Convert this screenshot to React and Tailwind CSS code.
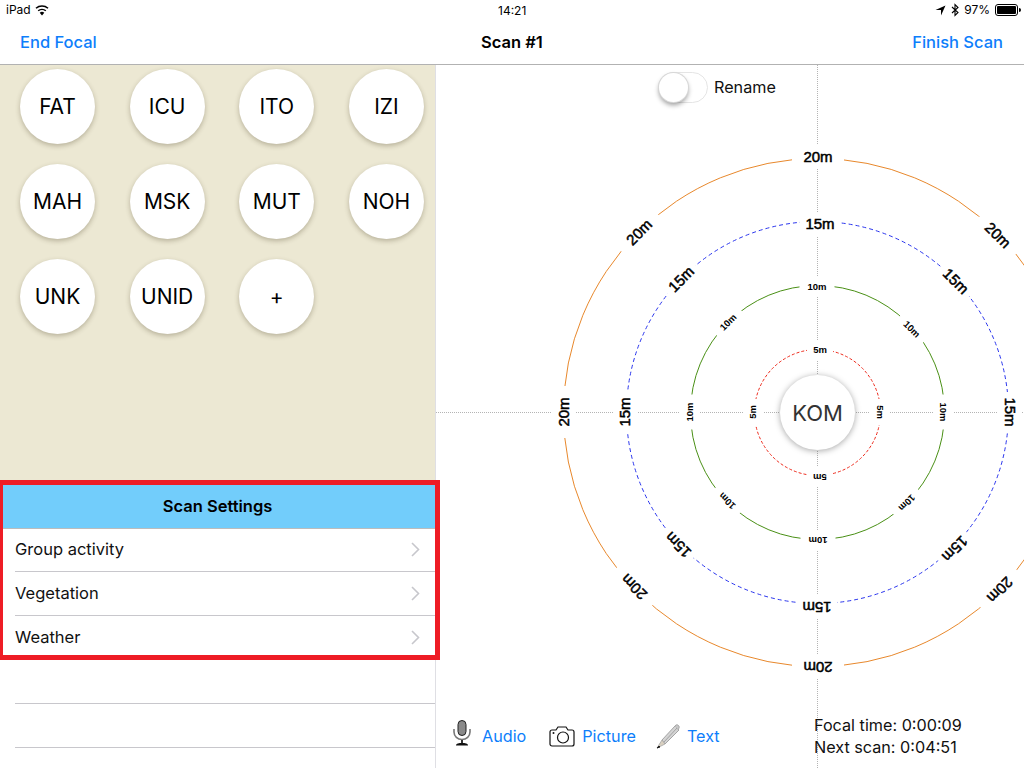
import React from "react";

const tags = ["FAT", "ICU", "ITO", "IZI", "MAH", "MSK", "MUT", "NOH", "UNK", "UNID", "+"];
const settings = ["Group activity", "Vegetation", "Weather"];

// centre of the rings inside the right panel (panel starts at x=436, y=65)
const cx = 381.5;
const cy = 347.5;

const rings = [
  { r: 254, color: "#e8882c", dash: "none" },
  { r: 191, color: "#2a35ee", dash: "4 3" },
  { r: 127, color: "#4a9016", dash: "none" },
  { r: 63, color: "#ee2a1c", dash: "3 2" },
];

// x, y are page coordinates of the label centre
const big = [
  [818, 157, 0, "20m"], [998, 235, 45, "20m"], [1000, 590, 135, "20m"],
  [818, 667, 180, "20m"], [634, 587, 225, "20m"], [564, 412, 270, "20m"], [639, 232, 315, "20m"],
  [820, 224, 0, "15m"], [956, 281, 45, "15m"], [1010, 412, 90, "15m"], [955, 549, 135, "15m"],
  [817, 607, 180, "15m"], [678, 545, 225, "15m"], [625, 412, 270, "15m"], [681, 279, 315, "15m"],
];
const small = [
  [817, 287, 0, "10m"], [912, 329, 45, "10m"], [943, 412, 90, "10m"], [907, 503, 135, "10m"],
  [818, 540, 180, "10m"], [727, 501, 225, "10m"], [690, 412, 270, "10m"], [728, 322, 315, "10m"],
  [820, 350, 0, "5m"], [880, 412, 90, "5m"], [820, 477, 180, "5m"], [753, 412, 270, "5m"],
];

const Label = ({ item, size, gap, height, bold }) => {
  const [x, y, rot, text] = item;
  return (
    <g transform={`translate(${x - 436} ${y - 65}) rotate(${rot})`}>
      <rect x={-gap / 2} y={-height / 2} width={gap} height={height} fill="#ffffff" />
      <text
        textAnchor="middle"
        y={size * 0.36}
        fontSize={size}
        fontWeight={bold ? 700 : 400}
        stroke="#000000"
        strokeWidth={bold ? 0 : 0.5}
        fill="#000000"
      >
        {text}
      </text>
    </g>
  );
};

const Radar = () => (
  <svg className="absolute inset-0 font-['Liberation_Sans',sans-serif]" width="588" height="703" viewBox="0 0 588 703">
    <line x1="0" y1={cy} x2="588" y2={cy} stroke="#b4b4b4" strokeDasharray="1 1" />
    <line x1={cx} y1="0" x2={cx} y2="703" stroke="#b4b4b4" strokeDasharray="1 1" />
    {rings.map((ring) => (
      <circle
        key={ring.r}
        cx={cx}
        cy={cy}
        r={ring.r}
        fill="none"
        stroke={ring.color}
        strokeDasharray={ring.dash}
      />
    ))}
    {big.map((item, i) => (
      <Label key={i} item={item} size={15} gap={item[3] === "20m" ? 52 : 40} height={24} />
    ))}
    {small.map((item, i) => (
      <Label key={i} item={item} size={9.5} gap={item[3] === "10m" ? 35 : 26} height={20} bold />
    ))}
  </svg>
);

const StatusBar = () => (
  <div className="relative flex h-5 items-center justify-between pl-[6px] pr-[3px] text-[12px] text-black">
    <div className="flex items-center gap-[4px]">
      <span>iPad</span>
      <svg width="14" height="11" viewBox="0 0 14 11">
        <path d="M7 10.500 4.700 7.800a3.500 3.500 0 0 1 4.600 0z" fill="#000" />
        <path d="M3.200 5.800a5.800 5.800 0 0 1 7.600 0M1 3.300a9 9 0 0 1 12 0" fill="none" stroke="#000" strokeWidth="1.500" />
      </svg>
    </div>
    <span className="absolute left-[498px] top-[2px]">14:21</span>
    <div className="flex items-center gap-[5px]">
      <svg width="11" height="11" viewBox="0 0 11 11">
        <path d="M10.500.5 6 10.500V5H.5z" fill="#000" />
      </svg>
      <svg width="8" height="14" viewBox="0 0 8 14">
        <path d="M1 4 7 9.500 4 12.500V1.500l3 3-6 5.500" fill="none" stroke="#000" strokeWidth="1.100" />
      </svg>
      <span>97%</span>
      <svg width="26" height="12" viewBox="0 0 26 12">
        <rect x="0.500" y="0.500" width="22" height="11" rx="2.500" fill="none" stroke="#000" />
        <rect x="2" y="2" width="19" height="8" rx="1" fill="#000" />
        <path d="M24 4a2 2 0 0 1 0 4z" fill="#000" />
      </svg>
    </div>
  </div>
);

const NavBar = () => (
  <div className="relative flex h-[45px] items-center justify-between border-b border-[#b2b2b2] pl-5 pr-[21px] text-[16.500px] font-medium">
    <span className="text-[#0d7efb]">End Focal</span>
    <span className="absolute left-[481px] text-black font-semibold">Scan #1</span>
    <span className="text-[#0d7efb]">Finish Scan</span>
  </div>
);

const TagButton = ({ label }) => (
  <div className="flex h-[75px] w-[75px] items-center justify-center rounded-full bg-white text-[21px] text-black shadow-[0_2px_5px_rgba(60,50,20,0.3)]">
    {label}
  </div>
);

const LeftPanel = () => (
  <div className="flex w-[436px] shrink-0 flex-col border-r border-[#dfdfe4]">
    <div className="h-[418px] bg-[#ece8d3] pt-1 pl-5 pr-[11px]">
      <div className="grid grid-cols-[repeat(4,75px)] justify-between gap-y-5">
        {tags.map((tag) => (
          <TagButton key={tag} label={tag} />
        ))}
      </div>
    </div>
    <div className="flex h-[46px] items-center justify-center border-b border-[#bcbcbc] bg-[#72cdfb] pt-[1px] text-[16.500px] font-semibold text-black">
      Scan Settings
    </div>
    {settings.map((name, i) => (
      <div
        key={name}
        className={`ml-[15px] flex items-center justify-between border-b border-[#c8c7cc] pr-[15px] text-[16.500px] text-[#111] ${
          i === 0 ? "h-[43px] pb-[1px]" : "h-11"
        }`}
      >
        <span>{name}</span>
        <svg width="9" height="15" viewBox="0 0 9 15">
          <path d="M1 1l6.500 6.500L1 14" fill="none" stroke="#c7c7cc" strokeWidth="1.600" />
        </svg>
      </div>
    ))}
    <div className="ml-[15px] h-11 border-b border-[#c8c7cc]" />
    <div className="ml-[15px] h-11 border-b border-[#c8c7cc]" />
  </div>
);

const MicIcon = () => (
  <svg className="-translate-y-[3px]" width="18" height="26" viewBox="0 0 18 26">
    <rect x="5" y="0.500" width="8" height="15" rx="4" fill="#8a8a8a" stroke="#222" />
    <path d="M1 9v3a8 7.500 0 0 0 16 0V9" fill="none" stroke="#777" strokeWidth="1.600" />
    <path d="M9 20v3" stroke="#333" strokeWidth="2" />
    <path d="M3 25.500c0-2 3-2.500 6-2.500s6 .5 6 2.500z" fill="#111" />
  </svg>
);

const CameraIcon = () => (
  <svg width="26" height="21" viewBox="0 0 26 21">
    <path d="M3 4h4l2-3h8l2 3h4a2 2 0 0 1 2 2v12a2 2 0 0 1-2 2H3a2 2 0 0 1-2-2V6a2 2 0 0 1 2-2z" fill="none" stroke="#111" strokeWidth="1.200" />
    <circle cx="14" cy="11.500" r="5.500" fill="none" stroke="#111" strokeWidth="1.200" />
    <circle cx="4.500" cy="7" r="1" fill="#111" />
  </svg>
);

const PencilIcon = () => (
  <svg width="25" height="26" viewBox="0 0 25 26">
    <path d="M6 17 19 3l4 4L9 21z" fill="#d4d4d4" stroke="#a4a4a4" strokeWidth="1" />
    <path d="M8 19 21 5M19 3c1-1.500 2.500-1.500 3.500-.5s1 2.500-.5 4" fill="#c8c8c8" stroke="#a4a4a4" />
    <path d="M6 17l3 4-8 4z" fill="#d9d0c0" stroke="#a4a4a4" strokeWidth="0.800" />
    <path d="M3 23l-2 2 3-1z" fill="#222" stroke="#222" />
  </svg>
);

const RightPanel = () => (
  <div className="relative flex flex-1 flex-col justify-between overflow-hidden">
    <Radar />
    <div className="relative flex items-center pl-[222px] pt-[7px]">
      <div className="h-[31px] w-[50px] rounded-full border border-[#e5e5e5] bg-white">
        <div className="h-[29px] w-[29px] rounded-full bg-white shadow-[0_3px_5px_rgba(0,0,0,0.4)] ring-1 ring-[#d8d8d8]" />
      </div>
      <span className="ml-[6px] pb-[1px] text-[16.200px] text-[#111]">Rename</span>
    </div>
    <div className="absolute left-[344px] top-[310px] flex h-[75px] w-[75px] items-center justify-center rounded-full bg-white pt-[2px] text-[22px] text-[#333] shadow-[0_1px_6px_rgba(0,0,0,0.35)]">
      KOM
    </div>
    <div className="relative flex items-end justify-between pb-[10px] pl-[17px] text-[16.200px]">
      <div className="flex items-center pb-[9px] text-[#0d7efb]">
        <MicIcon />
        <span className="ml-[11px]">Audio</span>
        <span className="ml-[23px]"><CameraIcon /></span>
        <span className="ml-[7px]">Picture</span>
        <span className="ml-[20px]"><PencilIcon /></span>
        <span className="ml-[6px]">Text</span>
      </div>
      <div className="w-[210px] leading-[22px] text-[#111]">
        <div>Focal time: 0:00:09</div>
        <div>Next scan: 0:04:51</div>
      </div>
    </div>
  </div>
);

export default function App() {
  return (
    <div className="relative h-[768px] w-[1024px] overflow-hidden bg-white font-[Inter,sans-serif]">
      <StatusBar />
      <NavBar />
      <div className="flex h-[703px]">
        <LeftPanel />
        <RightPanel />
      </div>
      <div className="absolute left-0 top-[480px] h-[180px] w-[440px] border-t-[5px] border-r-[5px] border-b-[5px] border-l-[3px] border-[#ee1c25]" />
    </div>
  );
}
